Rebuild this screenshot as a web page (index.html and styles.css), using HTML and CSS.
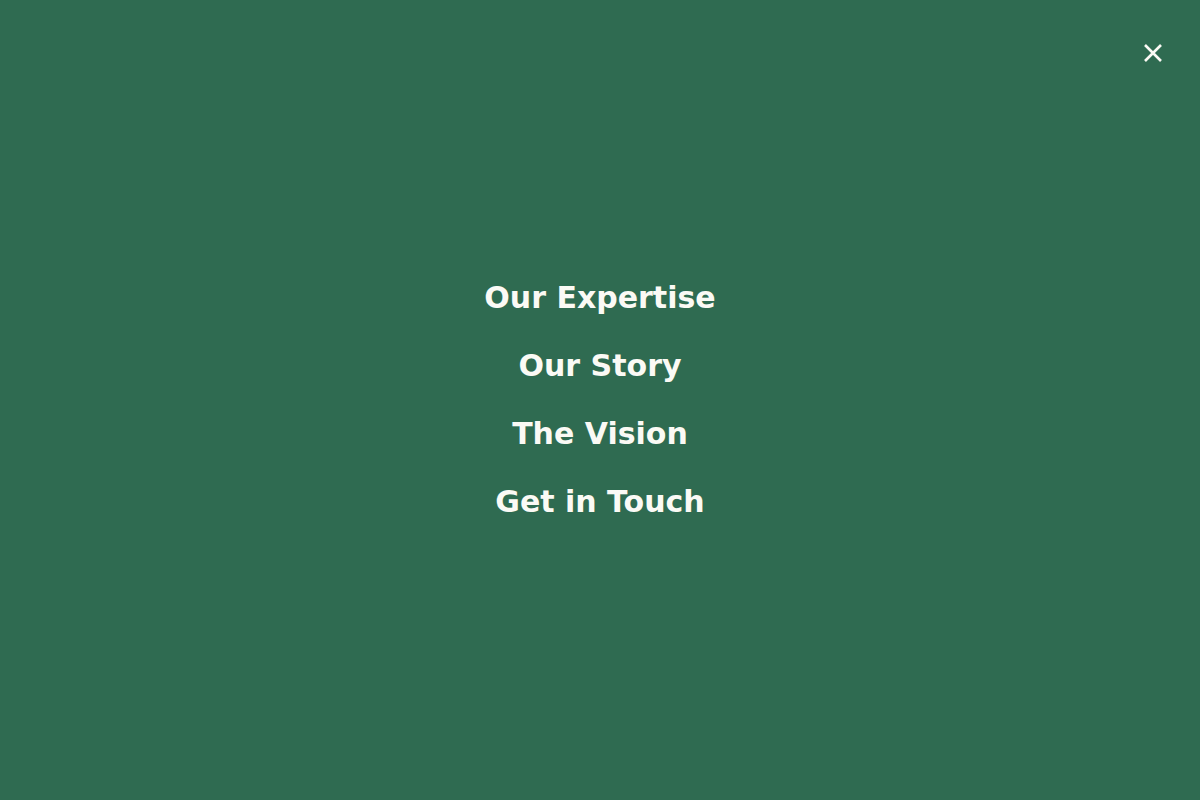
FILE: index.html
```html
<!DOCTYPE html>
<html lang="en">
<head>
<meta charset="utf-8">
<title>Menu</title>
<link rel="stylesheet" href="styles.css">
</head>
<body>
<div class="overlay">
  <button class="close" aria-label="Close menu">
    <svg width="22" height="22" viewBox="0 0 22 22" fill="none" stroke="currentColor" stroke-width="2.6" stroke-linecap="butt">
      <path d="M3 3 L19 19 M19 3 L3 19"/>
    </svg>
  </button>
  <nav class="menu">
    <a href="#" class="menu-link">Our Expertise</a>
    <a href="#" class="menu-link">Our Story</a>
    <a href="#" class="menu-link">The Vision</a>
    <a href="#" class="menu-link">Get in Touch</a>
  </nav>
</div>
</body>
</html>
```
FILE: styles.css
```css
html, body {
  margin: 0;
  padding: 0;
  height: 100%;
}
body {
  background: #2f6b51;
  font-family: "DejaVu Sans", sans-serif;
}
.overlay {
  position: relative;
  height: 100vh;
  display: flex;
  align-items: center;
  justify-content: center;
}
.close {
  position: absolute;
  top: 42px;
  right: 36px;
  width: 22px;
  height: 22px;
  padding: 0;
  border: 0;
  background: none;
  color: #fbfaf5;
  cursor: pointer;
  display: flex;
}
.menu {
  display: flex;
  flex-direction: column;
  align-items: center;
  gap: 32px;
}
.menu-link {
  color: #fbfaf5;
  text-decoration: none;
  font-weight: bold;
  font-size: 30px;
  line-height: 36px;
}
```
